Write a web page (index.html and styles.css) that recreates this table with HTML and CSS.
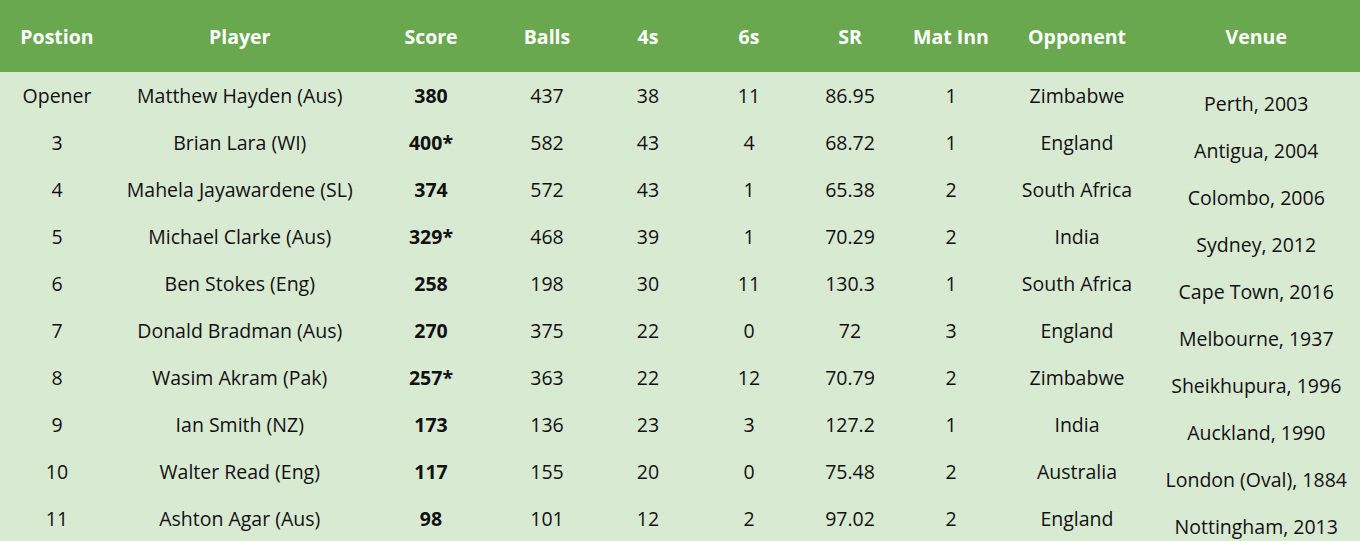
FILE: index.html
```html
<!DOCTYPE html>
<html>
<head>
<meta charset="utf-8">
<link rel="stylesheet" href="styles.css">
</head>
<body>
<table class="records">
  <colgroup>
    <col class="c-pos"><col class="c-player"><col class="c-score"><col class="c-num"><col class="c-num"><col class="c-num"><col class="c-num"><col class="c-num"><col class="c-opp"><col class="c-venue">
  </colgroup>
  <thead>
    <tr><th>Postion</th><th>Player</th><th>Score</th><th>Balls</th><th>4s</th><th>6s</th><th>SR</th><th>Mat Inn</th><th>Opponent</th><th>Venue</th></tr>
  </thead>
  <tbody>
    <tr><td>Opener</td><td>Matthew Hayden (Aus)</td><td class="score">380</td><td>437</td><td>38</td><td>11</td><td>86.95</td><td>1</td><td>Zimbabwe</td><td class="venue">Perth, 2003</td></tr>
    <tr><td>3</td><td>Brian Lara (WI)</td><td class="score">400*</td><td>582</td><td>43</td><td>4</td><td>68.72</td><td>1</td><td>England</td><td class="venue">Antigua, 2004</td></tr>
    <tr><td>4</td><td>Mahela Jayawardene (SL)</td><td class="score">374</td><td>572</td><td>43</td><td>1</td><td>65.38</td><td>2</td><td>South Africa</td><td class="venue">Colombo, 2006</td></tr>
    <tr><td>5</td><td>Michael Clarke (Aus)</td><td class="score">329*</td><td>468</td><td>39</td><td>1</td><td>70.29</td><td>2</td><td>India</td><td class="venue">Sydney, 2012</td></tr>
    <tr><td>6</td><td>Ben Stokes (Eng)</td><td class="score">258</td><td>198</td><td>30</td><td>11</td><td>130.3</td><td>1</td><td>South Africa</td><td class="venue">Cape Town, 2016</td></tr>
    <tr><td>7</td><td>Donald Bradman (Aus)</td><td class="score">270</td><td>375</td><td>22</td><td>0</td><td>72</td><td>3</td><td>England</td><td class="venue">Melbourne, 1937</td></tr>
    <tr><td>8</td><td>Wasim Akram (Pak)</td><td class="score">257*</td><td>363</td><td>22</td><td>12</td><td>70.79</td><td>2</td><td>Zimbabwe</td><td class="venue">Sheikhupura, 1996</td></tr>
    <tr><td>9</td><td>Ian Smith (NZ)</td><td class="score">173</td><td>136</td><td>23</td><td>3</td><td>127.2</td><td>1</td><td>India</td><td class="venue">Auckland, 1990</td></tr>
    <tr><td>10</td><td>Walter Read (Eng)</td><td class="score">117</td><td>155</td><td>20</td><td>0</td><td>75.48</td><td>2</td><td>Australia</td><td class="venue">London (Oval), 1884</td></tr>
    <tr><td>11</td><td>Ashton Agar (Aus)</td><td class="score">98</td><td>101</td><td>12</td><td>2</td><td>97.02</td><td>2</td><td>England</td><td class="venue">Nottingham, 2013</td></tr>
  </tbody>
</table>
</body>
</html>
```
FILE: styles.css
```css
html, body {
  margin: 0;
  padding: 0;
  background: #d9ead3;
}
body {
  font-family: "Open Sans", "Liberation Sans", sans-serif;
  font-size: 19.5px;
  color: #111;
}
.records {
  width: 1360px;
  border-collapse: collapse;
  table-layout: fixed;
  background: #d9ead3;
}
.c-pos { width: 114px; }
.c-player { width: 251.5px; }
.c-score { width: 131px; }
.c-num { width: 101px; }
.c-opp { width: 151px; }
.c-venue { width: 207.5px; }
.records th {
  background: #6aa84f;
  color: #fff;
  font-weight: 700;
  height: 72px;
  padding: 0;
  text-align: center;
  vertical-align: middle;
}
.records td {
  box-sizing: border-box;
  height: 47px;
  padding: 0;
  text-align: center;
  vertical-align: middle;
  line-height: 26px;
  white-space: nowrap;
}
.records td.score {
  font-weight: 700;
}
.records td.venue {
  padding-top: 17px;
}
```
